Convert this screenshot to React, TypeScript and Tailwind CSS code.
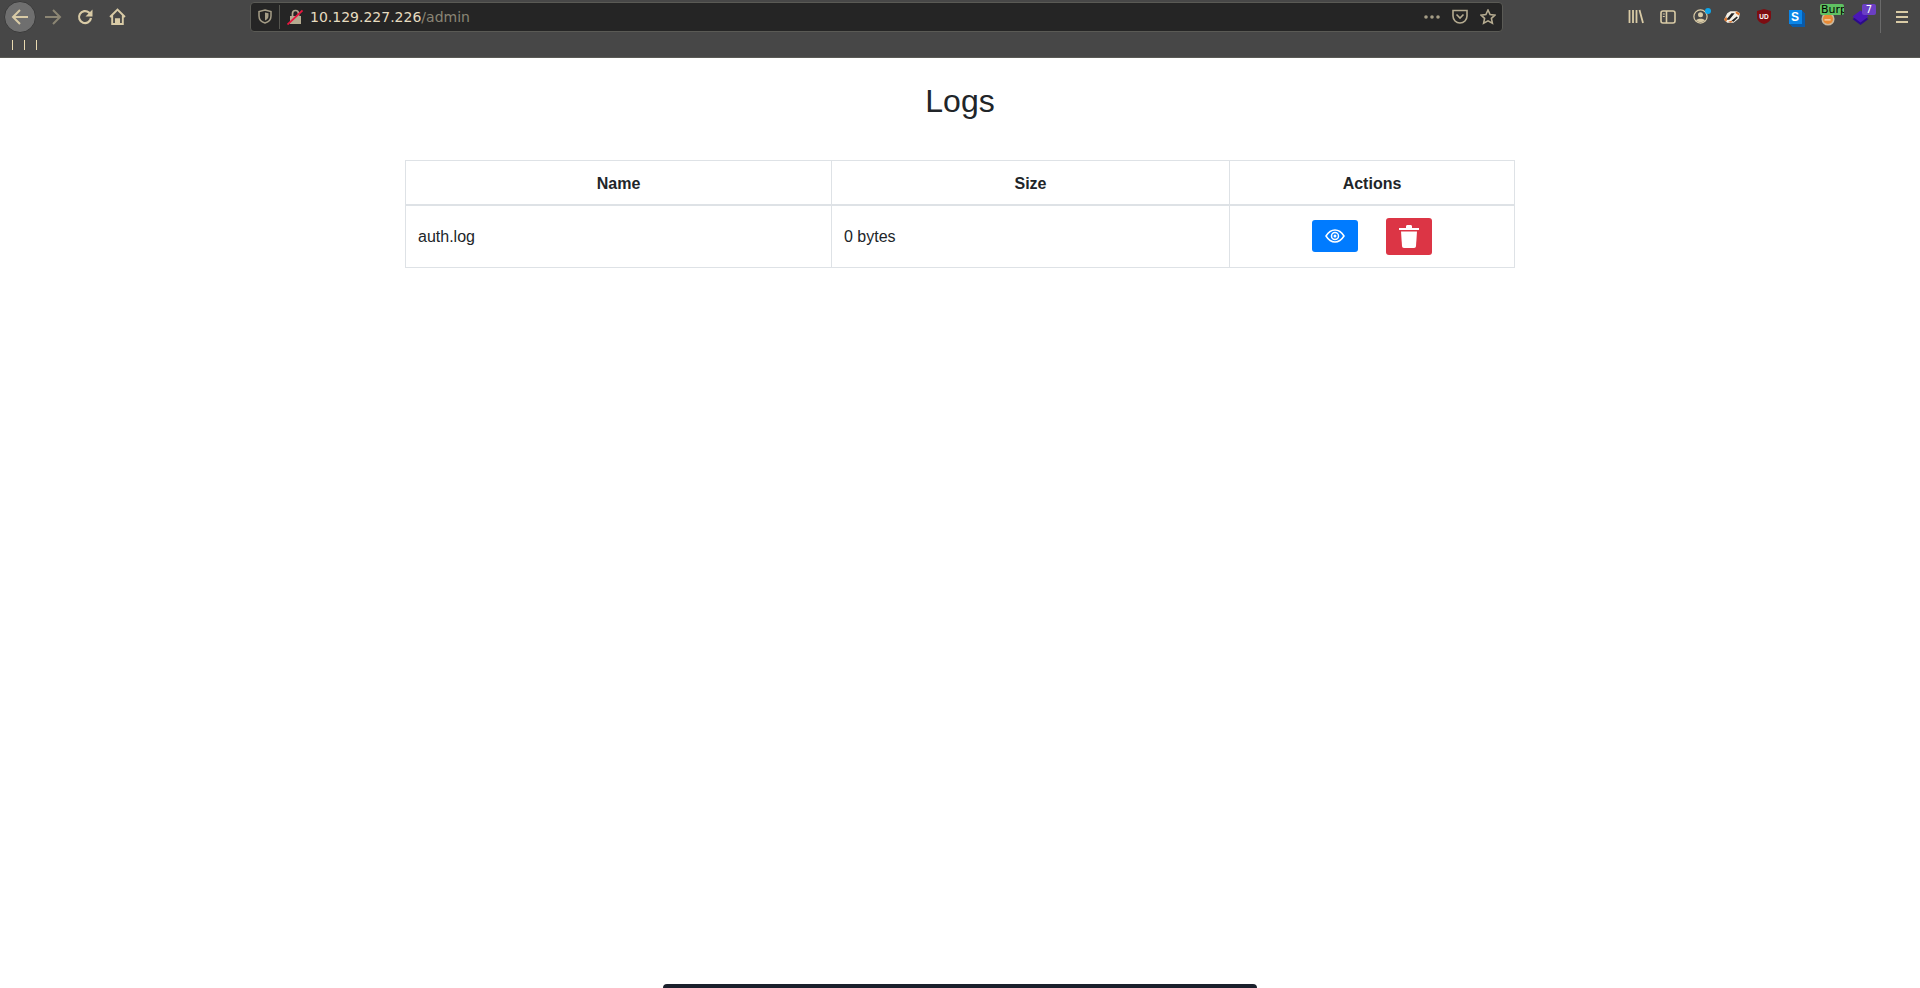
import React from 'react';

const TAN = '#d9cba6';

const Slot: React.FC<{ children: React.ReactNode; className?: string }> = ({ children, className = '' }) => (
  <div className={`relative flex h-8 w-8 shrink-0 items-center justify-center ${className}`}>{children}</div>
);

const Toolbar: React.FC = () => (
  <div className="h-[58px] border-b border-[#5a5a55] bg-[#474747]">
    <div className="flex h-[33px] items-center">
      <div className="flex w-[250px] shrink-0 items-center pl-1">
        <div className="flex h-8 w-8 items-center justify-center rounded-full border border-[#3a3a3a] bg-[#6f6f6f]">
          <svg width="18" height="18" viewBox="0 0 18 18" fill="none" stroke={TAN} strokeWidth="2">
            <path d="M17 9H2M9 2L2 9l7 7" />
          </svg>
        </div>
        <Slot className="ml-px">
          <svg width="18" height="18" viewBox="0 0 18 18" fill="none" stroke="#8c8674" strokeWidth="2">
            <path d="M1 9h15M9 2l7 7-7 7" />
          </svg>
        </Slot>
        <Slot>
          <svg width="16" height="16" viewBox="0 0 16 16" fill="none" stroke={TAN} strokeWidth="2.200">
            <path d="M14 9a6 6 0 1 1-2-5.500L14 6" />
            <path d="M15.500 0.500v7h-7z" fill={TAN} stroke="none" />
          </svg>
        </Slot>
        <Slot>
          <svg width="17" height="17" viewBox="0 0 16 16" fill="none" stroke={TAN} strokeWidth="1.800">
            <path d="M1 8.500l7-7 7 7M3 7v8h10V7" />
            <path d="M6.500 15v-4.500h3V15" fill={TAN} />
          </svg>
        </Slot>
      </div>

      <div className="flex h-[30px] w-[1253px] shrink-0 items-center rounded-[4px] border border-[#5a5a55] bg-[#252525] pl-[7px] pr-[6px]">
        <svg width="14" height="15" viewBox="0 0 14 15" fill="none">
          <path d="M7 1l6 1.500V7c0 3.500-2.500 6-6 7C3.500 13 1 10.500 1 7V2.500z" stroke="#a59d86" strokeWidth="1.500" />
          <path d="M7 3.500l3.500.8V7c0 2-1.500 3.700-3.500 4.400z" fill="#a59d86" />
        </svg>
        <div className="ml-[7px] h-6 w-px bg-[#55554f]" />
        <svg width="16" height="16" viewBox="0 0 16 16" className="ml-[7px]">
          <path d="M3 7h11v8H3z" fill="#b5ab90" />
          <path d="M5.500 7V4.500a3 3 0 0 1 6 0V7" fill="none" stroke="#b5ab90" strokeWidth="1.700" />
          <path d="M0.500 15.500L15.500 1.500" stroke="#e8173f" strokeWidth="1.800" />
        </svg>
        <div className="ml-[7px] pt-px font-['DejaVu_Sans',sans-serif] text-[14px] text-[#e6dcc0]">
          10.129.227.226<span className="text-[#8a8575]">/admin</span>
        </div>
        <div className="ml-auto flex items-center">
          <svg width="16" height="4" viewBox="0 0 16 4" fill="#a59d86" className="mr-[12px]">
            <circle cx="2" cy="2" r="1.800" />
            <circle cx="8" cy="2" r="1.800" />
            <circle cx="14" cy="2" r="1.800" />
          </svg>
          <svg width="16" height="15" viewBox="0 0 16 15" fill="none" stroke="#b5ab90" strokeWidth="1.600" className="mr-3">
            <path d="M1 1.500h14V7a7 7 0 0 1-14 0z" />
            <path d="M4.500 5.500L8 9l3.500-3.500" />
          </svg>
          <svg width="16" height="16" viewBox="0 0 16 16" fill="none" stroke="#b5ab90" strokeWidth="1.600">
            <path d="M8 1l2.100 4.500 4.900.6-3.600 3.300 1 4.800L8 11.800 3.600 14.200l1-4.800L1 6.100l4.900-.6z" />
          </svg>
        </div>
      </div>

      <div className="ml-[117px] flex items-center">
        <Slot>
          <svg width="16" height="15" viewBox="0 0 16 15" fill="none" stroke={TAN} strokeWidth="1.800">
            <path d="M1.500 1v13M5 1v13M8.500 1v13M11.500 1l3.500 13" />
          </svg>
        </Slot>
        <Slot>
          <svg width="16" height="14" viewBox="0 0 16 14" fill="none" stroke={TAN} strokeWidth="1.600">
            <rect x="1" y="1" width="14" height="12" rx="2" />
            <path d="M6.500 1v12" />
            <path d="M2.800 4h2M2.800 6.500h2" strokeWidth="1" />
          </svg>
        </Slot>
        <Slot>
          <svg width="15" height="15" viewBox="0 0 15 15" fill="none" stroke={TAN} strokeWidth="1.200">
            <circle cx="7.500" cy="7.500" r="6.600" />
            <circle cx="7.500" cy="5.800" r="2.500" fill={TAN} stroke="none" />
            <path d="M3 11.500c1-2.500 8-2.500 9 0a6.500 6.500 0 0 1-9 0z" fill={TAN} stroke="none" />
          </svg>
          <div className="absolute left-[21px] top-[7px] h-[6px] w-[6px] rounded-full bg-[#0ea5e9]" />
        </Slot>
        <Slot>
          <svg width="18" height="14" viewBox="0 0 17 13">
            <path d="M1 9L4 3l3-2h6l3 2-1 5-5 4-6 0z" fill="#f4f0e6" />
            <path d="M3 9l5-6 3 0-5 6zM8 10l5-4 1 1-4 4z" fill="#222" />
            <path d="M1 9l2-3 1 3-1 2zM5 11l3-1 1 1-2 1z" fill="#d9722a" />
            <path d="M12 1l4 2-1 2-3-2z" fill="#d9722a" />
          </svg>
        </Slot>
        <Slot>
          <svg width="14" height="15" viewBox="0 0 14 15">
            <path d="M7 0l7 2v6c0 3.500-3 6-7 7-4-1-7-3.500-7-7V2z" fill="#7d0d12" />
            <text x="7" y="9.500" textAnchor="middle" fontSize="6.500" fontWeight="700" fill="#fff" fontFamily="Liberation Sans, sans-serif">
              UD
            </text>
          </svg>
        </Slot>
        <Slot>
          <div className="mr-[2px] flex h-[14px] w-[13px] items-center justify-center bg-[#0a85e8] font-['Liberation_Sans',sans-serif] text-[12px] font-bold leading-none text-white shadow-[1px_1px_0_#0a5aa8,2px_2px_0_#0a5aa8,3px_3px_0_#0a5aa8]">
            S
          </div>
        </Slot>
        <Slot>
          <svg width="14" height="14" viewBox="0 0 16 16" className="mt-[4px]">
            <circle cx="8" cy="8" r="7.500" fill="#c9b9a0" />
            <circle cx="8" cy="8" r="5.800" fill="#e98a35" />
            <path d="M4 9h7" stroke="#f5d9b0" strokeWidth="1.500" />
          </svg>
          <div className="absolute left-[8px] top-[3px] h-[11px] w-6 overflow-hidden rounded-[2px] bg-[#5fc162] pl-px font-['DejaVu_Sans',sans-serif] text-[11px] leading-[11px] text-black">
            Burp
          </div>
        </Slot>
        <Slot>
          <svg width="17" height="16" viewBox="0 0 16 16" className="mt-[2px]">
            <path d="M0 9l8 6 8-6-8-5z" fill="#2c0b8a" />
            <path d="M0 6.500l8 6 8-6-8-6z" fill="#4a17b8" />
          </svg>
          <div className="absolute left-[18px] top-[3px] flex h-[11px] w-[14px] items-center justify-center rounded-[2px] bg-[#6b3fc4] font-['DejaVu_Sans',sans-serif] text-[10px] text-white">
            7
          </div>
        </Slot>
        <div className="ml-[4px] h-[33px] w-px bg-[#6a6a6a]" />
        <div className="ml-[15px] flex h-[12px] w-3 flex-col justify-between">
          <div className="h-[2px] bg-[#d9cba6]" />
          <div className="h-[2px] bg-[#d9cba6]" />
          <div className="h-[2px] bg-[#d9cba6]" />
        </div>
      </div>
    </div>

    <div className="flex h-6 items-center gap-[11px] pl-3">
      <div className="h-[10px] w-px bg-[#e8d9b0]" />
      <div className="h-[10px] w-px bg-[#e8d9b0]" />
      <div className="h-[10px] w-px bg-[#e8d9b0]" />
    </div>
  </div>
);

const App: React.FC = () => (
  <div className="flex h-[988px] flex-col overflow-hidden bg-white font-['Liberation_Sans',Arial,sans-serif] text-[#212529]">
    <Toolbar />
    <h2 className="mt-6 text-center text-[32px] font-normal leading-[38px]">Logs</h2>
    <div className="mx-auto mt-[40px] w-[1110px]">
      <table className="w-[1109px] table-fixed border-collapse text-[16px]">
        <colgroup>
          <col className="w-[426px]" />
          <col className="w-[398px]" />
          <col className="w-[285px]" />
        </colgroup>
        <thead>
          <tr className="h-[44px]">
            <th className="border border-b-2 border-[#dee2e6] px-3 pt-[3px] text-center font-bold">Name</th>
            <th className="border border-b-2 border-[#dee2e6] px-3 pt-[3px] text-center font-bold">Size</th>
            <th className="border border-b-2 border-[#dee2e6] px-3 pt-[3px] text-center font-bold">Actions</th>
          </tr>
        </thead>
        <tbody>
          <tr className="h-[63px]">
            <td className="border border-[#dee2e6] px-3 pt-[2px]">auth.log</td>
            <td className="border border-[#dee2e6] px-3 pt-[2px]">0 bytes</td>
            <td className="border border-[#dee2e6] px-3">
              <div className="flex items-center justify-center gap-[28px]">
                <button type="button" className="flex h-8 w-[46px] items-center justify-center rounded-[3px] bg-[#007bff]">
                  <svg width="20" height="14" viewBox="0 0 20 14" fill="none" stroke="#fff" strokeWidth="1.500">
                    <path d="M1 7c2.500-4 5.500-6 9-6s6.500 2 9 6c-2.500 4-5.500 6-9 6s-6.500-2-9-6z" />
                    <circle cx="10" cy="7" r="3.500" />
                    <circle cx="10" cy="7" r="1.500" fill="#fff" stroke="none" />
                  </svg>
                </button>
                <button type="button" className="flex h-[37px] w-[46px] items-center justify-center rounded-[3px] bg-[#dc3545]">
                  <svg width="20" height="23" viewBox="0 0 20 23" fill="#fff">
                    <path d="M0 3h20v2H0zM7 1.500C7 .7 7.500 0 8.500 0h3c1 0 1.500.7 1.500 1.500V3H7z" />
                    <path d="M2 6.500h16l-1 14.500c-.1 1-.8 2-2 2H5c-1.200 0-1.900-1-2-2z" />
                  </svg>
                </button>
              </div>
            </td>
          </tr>
        </tbody>
      </table>
    </div>
    <div className="mx-auto mt-auto h-1 w-[594px] rounded-t-lg bg-[#1a202c]" />
  </div>
);

export default App;
